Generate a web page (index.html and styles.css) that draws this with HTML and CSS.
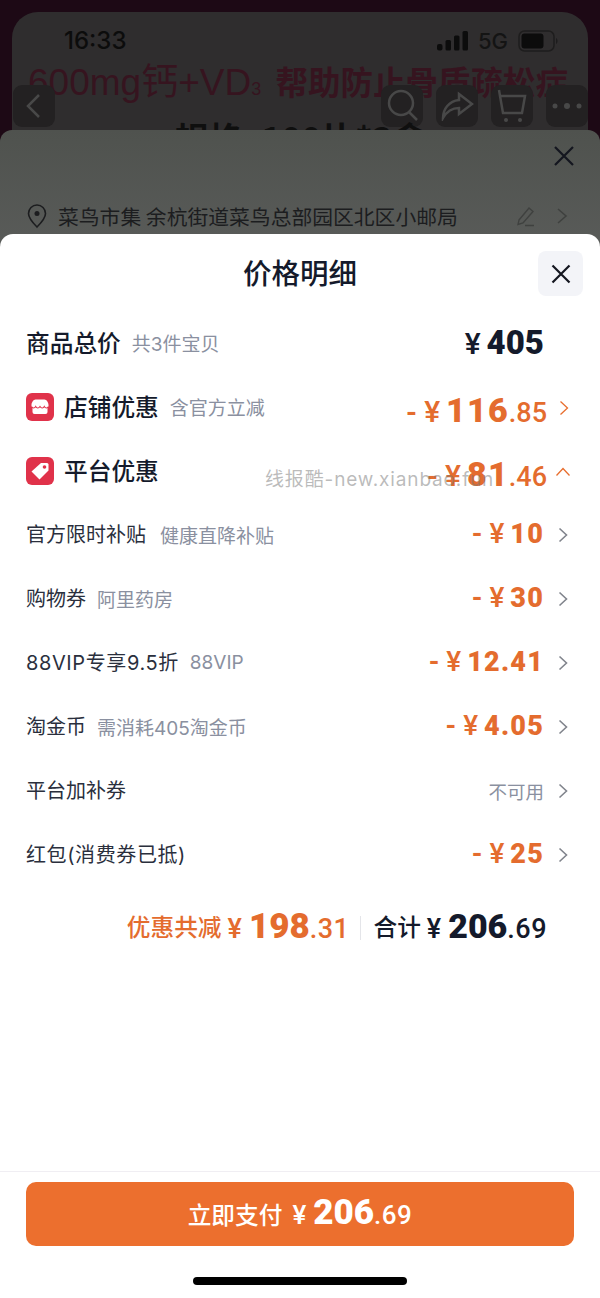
FILE: index.html
```html
<!DOCTYPE html>
<html>
<head>
    <meta charset="utf-8">
    <title>价格明细</title>
    <link rel="stylesheet" href="styles.css">
</head>
<body>
    <div class="screen">
        <!-- dimmed product page behind the sheets -->
        <div class="back-page">
            <div class="status-bar">
                <span class="time">16:33</span>
                <div class="status-right">
                    <svg width="31" height="20" viewBox="0 0 31 20"><rect x="0" y="13" width="5.500" height="6.500" rx="2"/><rect x="8.500" y="9" width="5.500" height="10.500" rx="1.500"/><rect x="17" y="4.500" width="5.500" height="15" rx="1.500"/><rect x="25.500" y="0" width="5.500" height="19.500" rx="1.500"/></svg>
                    <span class="net">5G</span>
                    <svg width="40" height="22" viewBox="0 0 40 22"><rect x="1" y="1" width="35" height="20" rx="5.500" fill="none" stroke="#111" stroke-opacity=".55" stroke-width="1.500"/><rect x="3.500" y="3.500" width="22" height="15" rx="3"/><path d="M38 8v6c1-.5 1.500-1.600 1.500-3s-.5-2.500-1.500-3z" opacity=".5"/></svg>
                </div>
            </div>
            <div class="headline">600mg钙+VD<small>3</small> <b>帮助防止骨质疏松症</b></div>
            <div class="nav-bar">
                <div class="nav-btn"><svg width="22" height="28" viewBox="0 0 22 28"><path d="M16 3 5 14l11 11" class="nav-line"/></svg></div>
                <div class="nav-right">
                    <div class="nav-btn"><svg width="36" height="38" viewBox="0 0 36 38"><circle cx="17" cy="16" r="12" class="nav-line"/><path d="m25 25 8 8" class="nav-line"/></svg></div>
                    <div class="nav-btn"><svg width="34" height="30" viewBox="0 0 34 30"><path d="M19 3 32 13 19 23v-6C12 17 7 20 3 27c0-9 6-17 16-18z" class="nav-line"/></svg></div>
                    <div class="nav-btn"><svg width="36" height="38" viewBox="0 0 36 38"><path d="M6 9h25l-3 17H9zM6 9 5 3" class="nav-line"/><circle cx="12" cy="33" r="2" class="nav-dot"/><circle cx="26" cy="33" r="2" class="nav-dot"/></svg></div>
                    <div class="nav-btn"><svg width="34" height="10" viewBox="0 0 34 10"><circle cx="5" cy="5" r="2.500" class="nav-dot"/><circle cx="17" cy="5" r="3" class="nav-dot"/><circle cx="29" cy="5" r="2.500" class="nav-dot"/></svg></div>
                </div>
            </div>
            <div class="spec">规格: 100片*3盒</div>
        </div>

        <!-- order sheet -->
        <div class="order-sheet">
            <div class="order-close">
                <svg width="22" height="22" viewBox="0 0 22 22"><path d="M2 2l18 18M20 2 2 20" class="x-line"/></svg>
            </div>
            <div class="address">
                <svg width="20" height="26" viewBox="0 0 20 26"><path d="M10 24C5 19 1.500 15 1.500 10.500a8.500 8.500 0 0 1 17 0C18.500 15 15 19 10 24z" fill="none" stroke="#1c1d1f" stroke-width="1.600"/><circle cx="10" cy="10.500" r="2.500" fill="#1c1d1f"/></svg>
                <span class="address-text">菜鸟市集 余杭街道菜鸟总部园区北区小邮局</span>
                <svg class="edit" width="20" height="22" viewBox="0 0 20 22"><path d="M3 15 13 3l4 3.500L7 18l-5 1.500zM9 20.500h9" fill="none" stroke="#3f413f" stroke-width="1.400"/></svg>
                <svg width="12" height="18" viewBox="0 0 12 18"><path d="m2 2 8 7-8 7" fill="none" stroke="#3f413f" stroke-width="1.600"/></svg>
            </div>
        </div>

        <!-- price detail sheet -->
        <div class="price-sheet">
            <div class="sheet-header">
                <h2>价格明细</h2>
                <div class="close-btn">
                    <svg width="20" height="20" viewBox="0 0 20 20"><path d="M1.500 1.500l17 17M18.500 1.500l-17 17" class="x-line"/></svg>
                </div>
            </div>

            <div class="row">
                <span class="label-main">商品总价</span><span class="note">共3件宝贝</span>
                <span class="amount main dark"><i class="yen">¥</i><b>405</b></span>
            </div>
            <div class="row">
                <span class="badge"><svg width="18" height="16" viewBox="0 0 18 16"><path d="M4.500.5h9c2 0 4 3 4 5.500V8H.5V6C.5 3.500 2.500.5 4.500.5zM1.500 8h15v5a2 2 0 0 1-2 2h-11a2 2 0 0 1-2-2z" fill="#fff"/><path d="M.5 7.500c1 2 3 2 4.200 0 1 2 3.100 2 4.300 0 1.200 2 3.300 2 4.300 0 1.200 2 3.200 2 4.200 0" fill="none" stroke="#e0324a" stroke-width="1.100"/></svg></span>
                <span class="label-main">店铺优惠</span><span class="note">含官方立减</span>
                <span class="amount main"><i class="sign">-</i><i class="yen">¥</i><b>116</b><em>.85</em></span>
                <svg class="chev small" width="10" height="16" viewBox="0 0 10 16"><path d="m1.500 1.500 7 6.500-7 6.500" fill="none" stroke="#e86e2e" stroke-width="1.300"/></svg>
            </div>
            <div class="row">
                <span class="badge"><svg width="20" height="20" viewBox="0 0 20 20"><path d="M11 2h6a1.500 1.500 0 0 1 1.500 1.500v6L9.500 18.500 1.500 10.500z" fill="#fff"/><circle cx="14.500" cy="6" r="1.800" fill="#e0324a"/></svg></span>
                <span class="label-main">平台优惠</span>
                <span class="amount main"><i class="sign">-</i><i class="yen">¥</i><b>81</b><em>.46</em></span>
                <svg class="chev small up" width="16" height="10" viewBox="0 0 16 10"><path d="m1.500 8.500 6.500-7 6.500 7" fill="none" stroke="#e86e2e" stroke-width="1.300"/></svg>
            </div>

            <div class="row">
                <span class="label">官方限时补贴</span><span class="note wide">健康直降补贴</span>
                <span class="amount"><i class="sign">-</i><i class="yen">¥</i><b>10</b></span>
                <svg class="chev" width="10" height="16" viewBox="0 0 10 16"><path d="m1.500 1.500 7 6.500-7 6.500" fill="none" stroke="#80848c" stroke-width="1.600"/></svg>
            </div>
            <div class="row">
                <span class="label">购物券</span><span class="note">阿里药房</span>
                <span class="amount"><i class="sign">-</i><i class="yen">¥</i><b>30</b></span>
                <svg class="chev" width="10" height="16" viewBox="0 0 10 16"><path d="m1.500 1.500 7 6.500-7 6.500" fill="none" stroke="#80848c" stroke-width="1.600"/></svg>
            </div>
            <div class="row">
                <span class="label spaced">88VIP专享9.5折</span><span class="note">88VIP</span>
                <span class="amount"><i class="sign">-</i><i class="yen">¥</i><b>12.41</b></span>
                <svg class="chev" width="10" height="16" viewBox="0 0 10 16"><path d="m1.500 1.500 7 6.500-7 6.500" fill="none" stroke="#80848c" stroke-width="1.600"/></svg>
            </div>
            <div class="row">
                <span class="label">淘金币</span><span class="note">需消耗405淘金币</span>
                <span class="amount"><i class="sign">-</i><i class="yen">¥</i><b>4.05</b></span>
                <svg class="chev" width="10" height="16" viewBox="0 0 10 16"><path d="m1.500 1.500 7 6.500-7 6.500" fill="none" stroke="#80848c" stroke-width="1.600"/></svg>
            </div>
            <div class="row">
                <span class="label">平台加补券</span>
                <span class="unavailable">不可用</span>
                <svg class="chev" width="10" height="16" viewBox="0 0 10 16"><path d="m1.500 1.500 7 6.500-7 6.500" fill="none" stroke="#80848c" stroke-width="1.600"/></svg>
            </div>
            <div class="row">
                <span class="label spaced">红包(消费券已抵)</span>
                <span class="amount"><i class="sign">-</i><i class="yen">¥</i><b>25</b></span>
                <svg class="chev" width="10" height="16" viewBox="0 0 10 16"><path d="m1.500 1.500 7 6.500-7 6.500" fill="none" stroke="#80848c" stroke-width="1.600"/></svg>
            </div>

            <div class="total">
                <span class="total-label orange">优惠共减</span>
                <span class="total-num orange"><i class="yen">¥</i><b>198</b><em>.31</em></span>
                <span class="divider"></span>
                <span class="total-label">合计</span>
                <span class="total-num dark final"><i class="yen">¥</i><b>206</b><em>.69</em></span>
            </div>

            <div class="sheet-footer">
                <button type="button" class="pay-btn">立即支付<span class="pay-num"><i class="yen">¥</i><b>206</b><em>.69</em></span></button>
                <div class="home-bar"></div>
            </div>
        </div>

        <div class="watermark">线报酷-new.xianbao.fun</div>
    </div>
</body>
</html>
```

FILE: styles.css
```css
* {
    box-sizing: border-box;
}
html, body {
    margin: 0;
    padding: 0;
}
body {
    font-family: "Noto Sans CJK SC", "Noto Sans", sans-serif;
    background-color: #1d0915;
}
i, em {
    font-style: normal;
}
.screen {
    position: relative;
    width: 600px;
    height: 1298px;
    overflow: hidden;
    padding: 12px 12px 0;
}

/* back page */
.back-page {
    height: 160px;
    border-radius: 26px 26px 0 0;
    background-color: #2f2d2e;
    padding: 0 0 0 1px;
    overflow: hidden;
}
.status-bar {
    height: 56px;
    padding: 1px 30px 0 51px;
    display: flex;
    justify-content: space-between;
    align-items: center;
}
.time {
    font-family: Inter, sans-serif;
    font-size: 24px;
    font-weight: 500;
    color: #0c0c0c;
}
.status-right {
    display: flex;
    align-items: center;
    gap: 10px;
    fill: #0c0c0c;
}
.net {
    font-family: Inter, sans-serif;
    font-size: 22px;
    font-weight: 500;
    color: #141414;
}
.headline {
    height: 0;
    padding-left: 15px;
    font-size: 37px;
    line-height: 26px;
    white-space: nowrap;
    color: #36141f;
    font-family: "Liberation Sans", "Noto Sans CJK SC", sans-serif;
}
.headline b {
    margin-left: 4px;
    font-size: 32.5px;
    font-family: "Noto Sans CJK SC", sans-serif;
}
.headline small {
    font-size: 18px;
}
.nav-bar {
    display: flex;
    justify-content: space-between;
    padding: 17px 0 0 0;
}
.nav-right {
    display: flex;
    gap: 13px;
}
.nav-btn {
    width: 42px;
    height: 42px;
    border-radius: 9px;
    background-color: #232122;
    display: flex;
    align-items: center;
    justify-content: center;
}
.nav-line {
    fill: none;
    stroke: #484848;
    stroke-width: 2.5;
}
.nav-dot {
    fill: #484848;
}
.spec {
    margin-top: -9px;
    text-align: center;
    font-size: 34px;
    line-height: 40px;
    font-weight: 700;
    color: #0f0f0f;
}

/* order sheet */
.order-sheet {
    position: absolute;
    left: 0;
    top: 130px;
    width: 600px;
    height: 130px;
    border-radius: 12px 12px 0 0;
    background: linear-gradient(#4f524e, #5a5c5a);
}
.order-close {
    display: flex;
    justify-content: flex-end;
    padding: 15px 25px 0 0;
}
.x-line {
    fill: none;
    stroke: #14161f;
    stroke-width: 2.2;
}
.address {
    display: flex;
    align-items: center;
    margin-top: 31px;
    padding: 0 32px 0 27px;
    height: 36px;
}
.address-text {
    flex: 1;
    margin-left: 11px;
    font-size: 20.8px;
    color: #1c1d1f;
    white-space: nowrap;
}
.edit {
    margin-right: 20px;
}

/* price sheet */
.price-sheet {
    position: absolute;
    left: 0;
    top: 234px;
    width: 600px;
    height: 1064px;
    background-color: #fff;
    border-radius: 13px 13px 0 0;
    display: flex;
    flex-direction: column;
}
.sheet-header {
    height: 77px;
    position: relative;
    text-align: center;
}
.sheet-header h2 {
    margin: 0;
    padding-top: 16px;
    font-size: 28.5px;
    line-height: 44px;
    font-weight: 500;
    color: #141a2b;
}
.close-btn {
    position: absolute;
    right: 17px;
    top: 17px;
    width: 45px;
    height: 45px;
    border-radius: 8px;
    background-color: #f3f4f8;
    display: flex;
    align-items: center;
    justify-content: center;
}
.row {
    height: 64px;
    flex: none;
    display: flex;
    align-items: center;
    padding: 0 26px;
    white-space: nowrap;
}
.label-main {
    font-size: 23.7px;
    font-weight: 500;
    color: #141a2b;
    padding-bottom: 2px;
}
.label {
    font-family: Inter, "Noto Sans CJK SC", sans-serif;
    font-size: 20px;
    color: #2a2f3d;
    padding-bottom: 3px;
}
.label.spaced {
    letter-spacing: 0.6px;
}
.note {
    margin-left: 11px;
    font-family: Inter, "Noto Sans CJK SC", sans-serif;
    font-size: 19px;
    color: #8a90a0;
    padding-bottom: 1px;
}
.note.wide {
    margin-left: 14px;
}
.badge {
    width: 28px;
    height: 28px;
    margin-right: 10px;
    border-radius: 6px;
    background-color: #e0324a;
    display: flex;
    align-items: center;
    justify-content: center;
}
.amount {
    margin-left: auto;
    font-family: Roboto, sans-serif;
    font-size: 27px;
    font-weight: 700;
    color: #e46c2e;
    display: flex;
    align-items: baseline;
    padding-bottom: 3px;
}
.amount .sign {
    margin-right: 7px;
}
.amount .yen {
    font-size: 28px;
    font-weight: 500;
    margin-right: 6px;
}
.amount b {
    letter-spacing: 1.2px;
}
.amount.main {
    font-size: 34px;
    padding: 6px 0 0;
}
.amount.main .yen {
    font-size: 30px;
}
.amount.main .sign {
    font-size: 28px;
}
.amount.main em {
    font-size: 27px;
    font-weight: 500;
}
.amount.dark {
    color: #141a2b;
    margin-right: 30px;
    padding: 0 0 2px;
    font-size: 33px;
}
.amount.dark b {
    letter-spacing: 0;
}
.chev {
    flex: none;
    margin-left: 14px;
    margin-right: 6px;
}
.chev.small {
    margin-left: 12px;
    margin-right: 5px;
    margin-top: 2px;
}
.chev.up {
    margin-left: 8px;
    margin-right: 3px;
}
.unavailable {
    margin-left: auto;
    font-size: 18.5px;
    color: #8a90a0;
}
.total {
    height: 78px;
    flex: none;
    display: flex;
    align-items: center;
    justify-content: flex-end;
    padding: 0 53px 0 0;
    white-space: nowrap;
}
.total-label {
    font-size: 23.7px;
    font-weight: 500;
    color: #141a2b;
}
.total-num {
    margin-left: 6px;
    font-family: Roboto, sans-serif;
    font-size: 35px;
    font-weight: 700;
    display: flex;
    align-items: baseline;
}
.total-num.final {
    font-size: 34px;
}
.total-num .yen {
    font-size: 27px;
    font-weight: 500;
    margin-right: 7px;
}
.total-num em {
    font-size: 27px;
    font-weight: 500;
    letter-spacing: 0.5px;
}
.orange {
    color: #e46c2e;
}
.dark {
    color: #141a2b;
}
.divider {
    width: 1px;
    height: 24px;
    margin: 4px 12px 0 11px;
    background-color: #e4e5e9;
}
.sheet-footer {
    margin-top: auto;
    height: 127px;
    border-top: 1px solid #f0eef3;
    padding: 10px 26px 0;
    display: flex;
    flex-direction: column;
    align-items: center;
}
.pay-btn {
    width: 100%;
    height: 64px;
    border: none;
    border-radius: 10px;
    background-color: #ec6f2e;
    color: #fff;
    font-family: "Noto Sans CJK SC", sans-serif;
    font-size: 23.7px;
    font-weight: 500;
    display: flex;
    align-items: baseline;
    justify-content: center;
    padding-top: 10px;
}
.pay-num {
    margin-left: 10px;
    font-family: Roboto, sans-serif;
    font-size: 35px;
    font-weight: 700;
    display: flex;
    align-items: baseline;
}
.pay-num .yen {
    font-size: 26px;
    font-weight: 500;
    margin-right: 7px;
}
.pay-num em {
    font-size: 26px;
    font-weight: 500;
    letter-spacing: 0.5px;
}
.home-bar {
    width: 214px;
    height: 8px;
    margin-top: 31px;
    border-radius: 4px;
    background-color: #000;
}
.watermark {
    position: absolute;
    left: 265px;
    top: 467px;
    font-family: Inter, "Noto Sans CJK SC", sans-serif;
    font-size: 19px;
    line-height: 26px;
    letter-spacing: 0.85px;
    white-space: nowrap;
    color: rgba(120, 120, 120, 0.5);
}
```
